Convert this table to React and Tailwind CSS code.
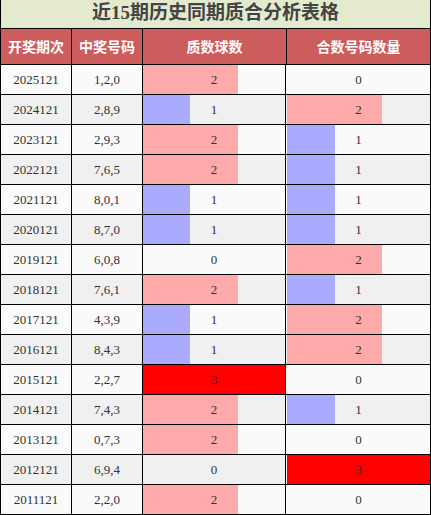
import React from 'react';

const rows = [
    ['2025121', '1,2,0', 2, 0],
    ['2024121', '2,8,9', 1, 2],
    ['2023121', '2,9,3', 2, 1],
    ['2022121', '7,6,5', 2, 1],
    ['2021121', '8,0,1', 1, 1],
    ['2020121', '8,7,0', 1, 1],
    ['2019121', '6,0,8', 0, 2],
    ['2018121', '7,6,1', 2, 1],
    ['2017121', '4,3,9', 1, 2],
    ['2016121', '8,4,3', 1, 2],
    ['2015121', '2,2,7', 3, 0],
    ['2014121', '7,4,3', 2, 1],
    ['2013121', '0,7,3', 2, 0],
    ['2012121', '6,9,4', 0, 3],
    ['2011121', '2,2,0', 2, 0],
];

const barClass = {
    0: 'w-0',
    1: 'w-1/3 bg-[#aaaaff]',
    2: 'w-2/3 bg-[#ffaaaa]',
    3: 'w-full bg-[#ff0000]',
};

const BarCell = ({ value, last }) => (
    <div className={`relative h-full w-[143px] ${last ? '' : 'border-r border-black'}`}>
        <div className={`absolute left-0 top-0 h-full ${barClass[value]}`}></div>
        <div className="relative flex h-full items-center justify-center">{value}</div>
    </div>
);

const App = () => {
    return (
        <div className="w-[431px] border-l border-r border-black bg-white font-['Liberation_Serif','Noto_Sans_CJK_SC',serif] text-[13px] text-[#333]">
            <div className="flex h-[29px] items-center justify-center border-b border-black bg-[#e3eacd] pb-[1px] text-[19px] font-bold text-[#444]">
                近15期历史同期质合分析表格
            </div>

            <div className="flex h-[36px] border-b border-black bg-[#cd5c5c] font-['Noto_Sans_CJK_SC',sans-serif] text-[14px] font-bold text-white">
                <div className="flex w-[71px] items-center justify-center border-r border-black">开奖期次</div>
                <div className="flex w-[71px] items-center justify-center border-r border-black">中奖号码</div>
                <div className="flex w-[144px] items-center justify-center border-r border-black">质数球数</div>
                <div className="flex w-[143px] items-center justify-center">合数号码数量</div>
            </div>

            {rows.map((r, i) => (
                <div key={r[0]} className={`flex h-[30px] border-b border-black ${i % 2 === 0 ? 'bg-[#fafafa]' : 'bg-[#f0f0f0]'}`}>
                    <div className="flex w-[71px] items-center justify-center border-r border-black">{r[0]}</div>
                    <div className="flex w-[71px] items-center justify-center border-r border-black">{r[1]}</div>
                    <div className="w-[144px]">
                        <BarCell value={r[2]} />
                    </div>
                    <BarCell value={r[3]} last />
                </div>
            ))}
        </div>
    );
};

export default App;
